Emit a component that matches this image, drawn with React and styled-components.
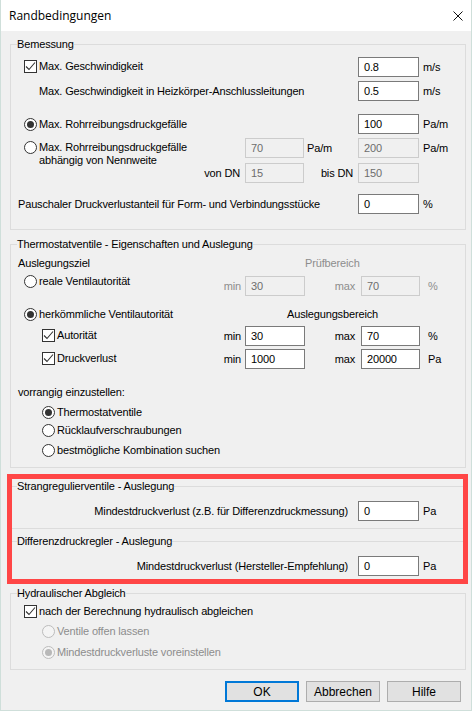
import React from 'react';
import styled, { createGlobalStyle } from 'styled-components';

const GlobalStyle = createGlobalStyle`
  html, body {
    margin: 0;
    padding: 0;
    background: #f0f0f0;
  }
  * {
    box-sizing: border-box;
  }
`;

const Window = styled.div`
  width: 472px;
  height: 711px;
  display: flex;
  flex-direction: column;
  border: 1px solid #cfdfda;
  border-top: none;
  background: #f0f0f0;
  font-family: "Liberation Sans", Arial, sans-serif;
  font-size: 11px;
  letter-spacing: -0.15px;
  color: #000;
  overflow: hidden;
`;

const TitleBar = styled.div`
  height: 31px;
  flex: none;
  background: #fff;
  display: flex;
  align-items: center;
  justify-content: space-between;
  padding: 0 8px;
`;

const Title = styled.span`
  font-family: "Open Sans", sans-serif;
  font-size: 12px;
  letter-spacing: 0;
`;

const Body = styled.div`
  flex: 1;
  display: flex;
  flex-direction: column;
  padding: 6px 5px 0 9px;
`;

/* classic group box */
const Group = styled.fieldset`
  margin: ${(p) => p.$mt || 0}px 0 0 0;
  padding: 0 0 ${(p) => p.$pb || 0}px 7px;
  border: 1px solid #dcdcdc;
  min-width: 0;
`;

const Legend = styled.legend`
  padding: 0;
  margin-left: -1px;
  line-height: 14px;
`;

// red frame drawn over the two valve groups
const Highlight = styled.div`
  position: relative;
  margin-top: ${(p) => p.$mt || 0}px;

  &::after {
    content: '';
    position: absolute;
    top: -5px;
    left: -3px;
    right: -2px;
    bottom: -2px;
    border: 5px solid #ff4646;
    pointer-events: none;
  }
`;

const Row = styled.div`
  display: grid;
  grid-template-columns: ${(p) => p.$cols || '200px 27px 59px 54px 61px 1fr'};
  grid-template-rows: ${(p) => p.$h || 20}px;
  align-items: center;
  margin-top: ${(p) => p.$mt || 0}px;
`;

const Cell = styled.div`
  grid-column: ${(p) => p.$col || 'auto'};
  justify-self: ${(p) => p.$justify || 'start'};
  align-self: ${(p) => (p.$top ? 'start' : 'center')};
  margin-top: ${(p) => p.$shift || 0}px;
  padding: 0 ${(p) => p.$pr || 0}px 0 ${(p) => p.$pl || 0}px;
  color: ${(p) => (p.$muted ? '#8d8d8d' : '#000')};
  line-height: 13px;
  white-space: nowrap;
`;

const Field = styled.div`
  grid-column: ${(p) => p.$col};
  height: 20px;
  border: 1px solid ${(p) => (p.$disabled ? '#cccccc' : '#7a7a7a')};
  background: ${(p) => (p.$disabled ? '#f0f0f0' : '#fff')};
  color: ${(p) => (p.$disabled ? '#6d6d6d' : '#000')};
  padding-left: 5px;
  line-height: 18px;
  white-space: nowrap;
`;

const Option = styled.label`
  display: inline-flex;
  align-items: ${(p) => (p.$top ? 'flex-start' : 'center')};
  gap: 2px;
  margin-left: ${(p) => p.$indent || 0}px;
  color: ${(p) => (p.$disabled ? '#8d8d8d' : '#000')};
  line-height: 13px;
  white-space: nowrap;
`;

const CheckBox = styled.span`
  width: 13px;
  height: 13px;
  flex: none;
  border: 1px solid #333;
  background: #fff;
  display: inline-flex;
  align-items: center;
  justify-content: center;
`;

const RadioRing = styled.span`
  width: 13px;
  height: 13px;
  flex: none;
  border-radius: 50%;
  border: 1px solid ${(p) => (p.$disabled ? '#bcbcbc' : '#333')};
  background: ${(p) => (p.$disabled ? '#f4f4f4' : '#fff')};
  display: inline-flex;
  align-items: center;
  justify-content: center;

  &::after {
    content: '';
    display: ${(p) => (p.$on ? 'block' : 'none')};
    width: 7px;
    height: 7px;
    border-radius: 50%;
    background: ${(p) => (p.$disabled ? '#b8b8b8' : '#333')};
  }
`;

const ButtonBar = styled.div`
  display: flex;
  justify-content: flex-end;
  gap: 7px;
  margin-top: ${(p) => p.$mt || 0}px;
  padding-right: 5px;
`;

const Button = styled.div`
  width: 74px;
  height: 21px;
  display: flex;
  align-items: center;
  justify-content: center;
  background: #e1e1e1;
  border: ${(p) => (p.$default ? '2px solid #0078d7' : '1px solid #adadad')};
  font-size: 12px;
  letter-spacing: 0;
`;

const Check = () => (
  <CheckBox>
    <svg width="11" height="11" viewBox="0 0 11 11">
      <path d="M1 5.5 L4 8.5 L10 1.5" fill="none" stroke="#333" strokeWidth="1.1" />
    </svg>
  </CheckBox>
);

const Radio = ({ on, disabled }) => <RadioRing $on={on} $disabled={disabled} />;

const CloseIcon = () => (
  <svg width="10" height="10" viewBox="0 0 10 10">
    <path d="M0.5 0.5 L9.5 9.5 M9.5 0.5 L0.5 9.5" stroke="#111" strokeWidth="1" />
  </svg>
);

const THERMO_COLS = '200px 27px 60px 56px 59px 1fr';

const App = () => {
  return (
    <>
      <GlobalStyle />
      <Window>
        <TitleBar>
          <Title>Randbedingungen</Title>
          <CloseIcon />
        </TitleBar>
        <Body>
          <Group $pb={15}>
            <Legend>Bemessung</Legend>
            <Row $mt={6}>
              <Cell $col="1 / 5">
                <Option $indent={6}><Check />Max. Geschwindigkeit</Option>
              </Cell>
              <Field $col={5}>0.8</Field>
              <Cell $col={6} $pl={4}>m/s</Cell>
            </Row>
            <Row $mt={4}>
              <Cell $col="1 / 5" $pl={21}>Max. Geschwindigkeit in Heizkörper-Anschlussleitungen</Cell>
              <Field $col={5}>0.5</Field>
              <Cell $col={6} $pl={4}>m/s</Cell>
            </Row>
            <Row $mt={13}>
              <Cell $col="1 / 5">
                <Option $indent={6}><Radio on />Max. Rohrreibungsdruckgefälle</Option>
              </Cell>
              <Field $col={5}>100</Field>
              <Cell $col={6} $pl={4}>Pa/m</Cell>
            </Row>
            <Row $mt={4}>
              <Cell $col="1 / 3" $top $shift={3}>
                <Option $indent={6} $top>
                  <Radio />
                  <span>Max. Rohrreibungsdruckgefälle<br />abhängig von Nennweite</span>
                </Option>
              </Cell>
              <Field $col={3} $disabled>70</Field>
              <Cell $col={4} $pl={3}>Pa/m</Cell>
              <Field $col={5} $disabled>200</Field>
              <Cell $col={6} $pl={4}>Pa/m</Cell>
            </Row>
            <Row $mt={5}>
              <Cell $col="1 / 3" $justify="end" $pr={5}>von DN</Cell>
              <Field $col={3} $disabled>15</Field>
              <Cell $col={4} $justify="end" $pr={5}>bis DN</Cell>
              <Field $col={5} $disabled>150</Field>
            </Row>
            <Row $mt={11}>
              <Cell $col="1 / 5">Pauschaler Druckverlustanteil für Form- und Verbindungsstücke</Cell>
              <Field $col={5}>0</Field>
              <Cell $col={6} $pl={4}>%</Cell>
            </Row>
          </Group>

          <Group $mt={7} $pb={8}>
            <Legend>Thermostatventile - Eigenschaften und Auslegung</Legend>
            <Row $cols={THERMO_COLS} $h={14} $mt={5}>
              <Cell $col="1 / 3">Auslegungsziel</Cell>
              <Cell $col="4 / 7" $muted>Prüfbereich</Cell>
            </Row>
            <Row $cols={THERMO_COLS} $mt={6}>
              <Cell $col={1} $top $shift={-1}>
                <Option $indent={6}><Radio />reale Ventilautorität</Option>
              </Cell>
              <Cell $col={2} $justify="end" $pr={4} $muted>min</Cell>
              <Field $col={3} $disabled>30</Field>
              <Cell $col={4} $justify="end" $pr={6} $muted>max</Cell>
              <Field $col={5} $disabled>70</Field>
              <Cell $col={6} $pl={8} $muted>%</Cell>
            </Row>
            <Row $cols={THERMO_COLS} $h={14} $mt={11}>
              <Cell $col="1 / 3">
                <Option $indent={6}><Radio on />herkömmliche Ventilautorität</Option>
              </Cell>
              <Cell $col="3 / 6" $justify="center">Auslegungsbereich</Cell>
            </Row>
            <Row $cols={THERMO_COLS} $mt={5}>
              <Cell $col={1}>
                <Option $indent={24}><Check />Autorität</Option>
              </Cell>
              <Cell $col={2} $justify="end" $pr={4}>min</Cell>
              <Field $col={3}>30</Field>
              <Cell $col={4} $justify="end" $pr={6}>max</Cell>
              <Field $col={5}>70</Field>
              <Cell $col={6} $pl={8}>%</Cell>
            </Row>
            <Row $cols={THERMO_COLS} $mt={3}>
              <Cell $col={1}>
                <Option $indent={24}><Check />Druckverlust</Option>
              </Cell>
              <Cell $col={2} $justify="end" $pr={4}>min</Cell>
              <Field $col={3}>1000</Field>
              <Cell $col={4} $justify="end" $pr={6}>max</Cell>
              <Field $col={5}>20000</Field>
              <Cell $col={6} $pl={8}>Pa</Cell>
            </Row>
            <Row $cols={THERMO_COLS} $h={14} $mt={16}>
              <Cell $col="1 / 3">vorrangig einzustellen:</Cell>
            </Row>
            <Row $cols={THERMO_COLS} $h={14} $mt={6}>
              <Cell $col="1 / 3">
                <Option $indent={24}><Radio on />Thermostatventile</Option>
              </Cell>
            </Row>
            <Row $cols={THERMO_COLS} $h={14} $mt={6}>
              <Cell $col="1 / 3">
                <Option $indent={24}><Radio />Rücklaufverschraubungen</Option>
              </Cell>
            </Row>
            <Row $cols={THERMO_COLS} $h={14} $mt={6}>
              <Cell $col="1 / 4">
                <Option $indent={24}><Radio />bestmögliche Kombination suchen</Option>
              </Cell>
            </Row>
          </Group>

          <Highlight $mt={11}>
            <Group $pb={7}>
              <Legend>Strangregulierventile - Auslegung</Legend>
              <Row $mt={8}>
                <Cell $col="1 / 5" $justify="end" $pr={10}>Mindestdruckverlust (z.B. für Differenzdruckmessung)</Cell>
                <Field $col={5}>0</Field>
                <Cell $col={6} $pl={4}>Pa</Cell>
              </Row>
            </Group>
            <Group $mt={5} $pb={5}>
              <Legend>Differenzdruckregler - Auslegung</Legend>
              <Row $mt={8}>
                <Cell $col="1 / 5" $justify="end" $pr={10}>Mindestdruckverlust (Hersteller-Empfehlung)</Cell>
                <Field $col={5}>0</Field>
                <Cell $col={6} $pl={4}>Pa</Cell>
              </Row>
            </Group>
          </Highlight>

          <Group $mt={4} $pb={10}>
            <Legend>Hydraulischer Abgleich</Legend>
            <Row $h={14} $mt={5}>
              <Cell $col="1 / 6">
                <Option $indent={6}><Check />nach der Berechnung hydraulisch abgleichen</Option>
              </Cell>
            </Row>
            <Row $h={14} $mt={7}>
              <Cell $col="1 / 6">
                <Option $indent={24} $disabled><Radio disabled />Ventile offen lassen</Option>
              </Cell>
            </Row>
            <Row $h={14} $mt={5}>
              <Cell $col="1 / 6">
                <Option $indent={24} $disabled><Radio on disabled />Mindestdruckverluste voreinstellen</Option>
              </Cell>
            </Row>
          </Group>

          <ButtonBar $mt={11}>
            <Button $default>OK</Button>
            <Button>Abbrechen</Button>
            <Button>Hilfe</Button>
          </ButtonBar>
        </Body>
      </Window>
    </>
  );
};

export default App;
